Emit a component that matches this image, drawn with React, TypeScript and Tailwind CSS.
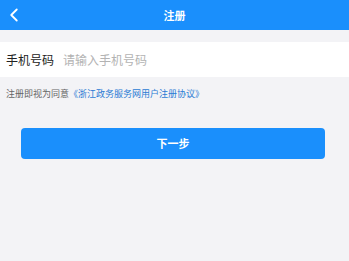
import { ChevronLeft } from "lucide-react";

export default function App() {
  return (
    <div
      className="w-[349px] h-[261px] bg-[#f3f3f6] flex flex-col"
      style={{ fontFamily: '"Noto Sans CJK SC", "Noto Sans", sans-serif' }}
    >
      <header className="h-[30px] bg-[#1a8ffc] flex items-center relative">
        <ChevronLeft className="absolute left-[3px] text-white" size={22} strokeWidth={2} />
        <h1 className="flex-1 text-center text-white text-[11px] font-bold">注册</h1>
      </header>

      <div className="mt-[12px] h-[35px] bg-white flex items-center px-[6px]">
        <span className="text-[12px] text-[#222] w-[57px]">手机号码</span>
        <input
          className="flex-1 text-[12px] outline-none placeholder:text-[#b3b3b3] bg-transparent"
          placeholder="请输入手机号码"
        />
      </div>

      <p className="mt-[10px] px-[6px] text-[9px] text-[#666] leading-[14px]">
        注册即视为同意<span className="text-[#2b7bd4]">《浙江政务服务网用户注册协议》</span>
      </p>

      <button className="mt-[27px] ml-[21px] w-[304px] h-[31px] rounded-[4px] bg-[#1a8ffc] text-white text-[11px] font-bold">
        下一步
      </button>
    </div>
  );
}
